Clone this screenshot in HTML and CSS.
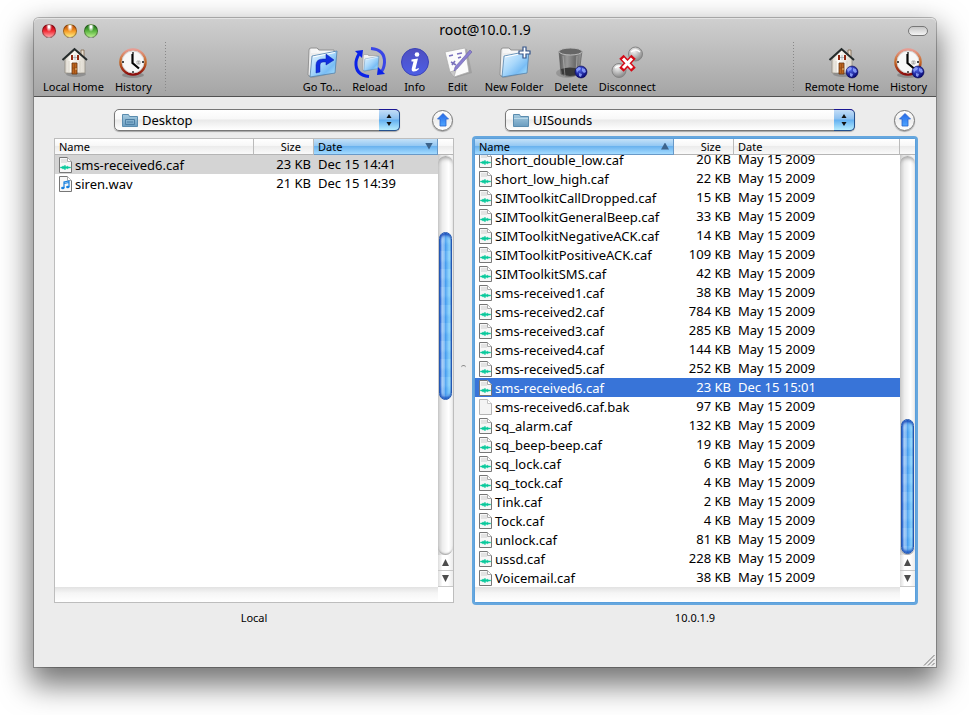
FILE: index.html
```html
<!DOCTYPE html>
<html lang="en">
<head>
  <meta charset="UTF-8">
  <meta name="viewport" content="width=device-width, initial-scale=1.0">
  <title>root@10.0.1.9</title>
  <link rel="stylesheet" href="styles.css">
</head>
<body>
  <svg class="defs" width="0" height="0" aria-hidden="true">
    <defs>
      <linearGradient id="folderBlue" x1="0" y1="0" x2="1" y2="1">
        <stop offset="0" stop-color="#eaf6ff"/>
        <stop offset="0.45" stop-color="#a9d8fb"/>
        <stop offset="0.7" stop-color="#79bdf5"/>
        <stop offset="1" stop-color="#b4ecff"/>
      </linearGradient>
      <linearGradient id="wall" x1="0" y1="0" x2="1" y2="0">
        <stop offset="0" stop-color="#d9d4ca"/>
        <stop offset="0.3" stop-color="#fffdf8"/>
        <stop offset="1" stop-color="#ddd8ce"/>
      </linearGradient>
      <linearGradient id="rim" x1="0" y1="0" x2="0" y2="1">
        <stop offset="0" stop-color="#e89c92"/>
        <stop offset="0.5" stop-color="#c46a28"/>
        <stop offset="1" stop-color="#8c0d0d"/>
      </linearGradient>
      <linearGradient id="infoBlue" x1="0" y1="0" x2="0" y2="1">
        <stop offset="0" stop-color="#4f4fc0"/>
        <stop offset="1" stop-color="#4c5ee6"/>
      </linearGradient>
      <linearGradient id="bin" x1="0" y1="0" x2="1" y2="0">
        <stop offset="0" stop-color="#5a5a5a"/>
        <stop offset="0.35" stop-color="#999"/>
        <stop offset="0.7" stop-color="#6c6c6c"/>
        <stop offset="1" stop-color="#999"/>
      </linearGradient>
      <radialGradient id="glass" cx="0.4" cy="0.3" r="0.7">
        <stop offset="0" stop-color="#f4f4f4"/>
        <stop offset="0.6" stop-color="#b4b4b4"/>
        <stop offset="1" stop-color="#888"/>
      </radialGradient>
      <radialGradient id="globeBlue" cx="0.4" cy="0.3" r="0.7">
        <stop offset="0" stop-color="#4d63e8"/>
        <stop offset="1" stop-color="#070772"/>
      </radialGradient>
      <linearGradient id="upBlue" x1="0" y1="0" x2="0" y2="1">
        <stop offset="0" stop-color="#2468e8"/>
        <stop offset="1" stop-color="#4fa6ff"/>
      </linearGradient>
      <linearGradient id="smallFolder" x1="0" y1="0" x2="0" y2="1">
        <stop offset="0" stop-color="#a6cbe0"/>
        <stop offset="1" stop-color="#6a9cbf"/>
      </linearGradient>
    </defs>

    <symbol id="house" viewBox="0 0 32 32">
      <ellipse cx="19" cy="27" rx="10" ry="3" fill="#000" opacity="0.18"/>
      <path d="M24 3h3v9l-3-3z" fill="#e6ddcf" stroke="#80684d" stroke-width="0.8"/>
      <path d="M8 12L18 3l10 9v14H8z" fill="url(#wall)" stroke="#8e877c" stroke-width="0.7"/>
      <path d="M5.500 13L17.500 2 30 13" fill="none" stroke="#252b2b" stroke-width="2"/>
      <path d="M14 8h8v5h-8z" fill="#922a12"/>
      <path d="M16 8h4v5h-4z" fill="#f2f4f5"/>
      <path d="M18 8v5M16 10.500h4" stroke="#8d9aa0" stroke-width="0.6"/>
      <path d="M15 16h5v11h-5z" fill="#bd651e" stroke="#643310" stroke-width="0.8"/>
      <path d="M17.500 17v9M15 21h5" stroke="#8a4513" stroke-width="0.6"/>
      <circle cx="19" cy="22" r="0.700" fill="#ffe3a0"/>
      <path d="M12 14v12M23 14v12" stroke="#d3cdc2" stroke-width="0.8"/>
    </symbol>

    <symbol id="clock" viewBox="0 0 32 32">
      <ellipse cx="16" cy="28" rx="11" ry="3" fill="#000" opacity="0.2"/>
      <circle cx="16" cy="15" r="12.500" fill="#f8f8f8" stroke="url(#rim)" stroke-width="2.600"/>
      <circle cx="16" cy="15" r="11" fill="none" stroke="#c7c7c7" stroke-width="0.7"/>
      <path d="M16 5v2M16 24v2M5 15h2M25 15h2" stroke="#111" stroke-width="1.300"/>
      <path d="M20 14h3v3h-3zM21.500 14v3" fill="none" stroke="#999" stroke-width="0.7"/>
      <path d="M15.500 7v9l6.500 5.500" fill="none" stroke="#050505" stroke-width="2.200"/>
    </symbol>

    <symbol id="folder" viewBox="0 0 32 32">
      <path d="M2 29L3 4q0-3 3-3h6l2 3 17 1-2 21-22 5z" fill="#777" opacity="0.35"/>
      <path d="M2 28L3 3q0-2 2-2h6l2 2h15v20L5 30z" fill="#ededed" stroke="#858585" stroke-width="0.800"/>
      <path d="M5 3h6l1 2M5 5h22" fill="none" stroke="#fff" stroke-width="1"/>
      <path d="M6 9l25-5-2 22-25 4z" fill="url(#folderBlue)" stroke="#5484af" stroke-width="0.800"/>
      <path d="M7 10l22-4.500" stroke="#fff" stroke-width="1"/>
    </symbol>

    <symbol id="globe" viewBox="0 0 14 14">
      <circle cx="7" cy="7" r="6" fill="url(#globeBlue)" stroke="#050551" stroke-width="0.600"/>
      <path d="M2 4l3-2 2 1-1 2-2 1-1 2zM8 3l3 1 1 3-2 1-2-2zM5 8l3 1-1 3-2-1z" fill="#91a6ff" opacity="0.850"/>
    </symbol>

    <symbol id="caf" viewBox="0 0 13 16">
      <path d="M0.500 0.500h8l4 4v11h-12z" fill="#f7f7f7" stroke="#777"/>
      <path d="M2 2h6v4H2z" fill="#e3e3e3"/>
      <path d="M8.500 0.500v4h4" fill="#fff" stroke="#aaa"/>
      <path d="M1.500 10h1l1.500-1 1 .5L6 8l1 2 1.500-1 1 1h2v1H9.500l-1 1L7 11l-1 2-1-1.500-1 .5-1.500-1h-1z" fill="#09c99c" stroke="#09c99c" stroke-width="0.400"/>
    </symbol>
    <symbol id="wav" viewBox="0 0 13 16">
      <path d="M0.500 0.500h8l4 4v11h-12z" fill="#f7f7f7" stroke="#777"/>
      <path d="M8.500 0.500v4h4" fill="#fff" stroke="#aaa"/>
      <path d="M5 12V6l5-1v6M5 7.500l5-1" fill="none" stroke="#1780e0" stroke-width="1.200"/>
      <ellipse cx="3.800" cy="12" rx="1.700" ry="1.300" fill="#1780e0"/>
      <ellipse cx="8.800" cy="11" rx="1.700" ry="1.300" fill="#1780e0"/>
    </symbol>
    <symbol id="bak" viewBox="0 0 13 16">
      <path d="M0.500 0.500h8l4 4v11h-12z" fill="#f4f4f4" stroke="#b5b5b5"/>
      <path d="M8.500 0.500v4h4" fill="#fff" stroke="#c5c5c5"/>
    </symbol>
    <symbol id="up" viewBox="0 0 12 14">
      <path d="M6 .5L11.500 6H9v7H3V6H.500z" fill="url(#upBlue)" stroke="#2a62cc" stroke-width="0.800"/>
    </symbol>
    <symbol id="updown" viewBox="0 0 6 12">
      <path d="M3 0l2.500 4h-5zM3 12L.500 8h5z" fill="#111"/>
    </symbol>
  </svg>

  <main class="window">
    <header class="chrome">
      <div class="titlebar">
        <div class="lights">
          <button class="light red" aria-label="Close"></button>
          <button class="light orange" aria-label="Minimize"></button>
          <button class="light green" aria-label="Zoom"></button>
        </div>
        <h1>root@10.0.1.9</h1>
        <button class="pill" aria-label="Toggle toolbar"></button>
      </div>

      <nav class="toolbar">
        <div class="group divided-right">
          <button class="tool"><svg><use href="#house"/></svg>Local Home</button>
          <button class="tool"><svg><use href="#clock"/></svg>History</button>
        </div>
        <div class="group">
          <button class="tool">
            <svg viewBox="0 0 32 32">
              <use href="#folder"/>
              <path d="M10 26v-8q0-6 7-6h3V7l8 6-8 5v-3h-3q-3 0-3 3v7z" fill="#1030e0" stroke="#0a1da8" stroke-width="0.500"/>
            </svg>Go To...
          </button>
          <button class="tool">
            <svg viewBox="0 0 32 32">
              <use href="#folder" x="7" y="7" width="19" height="18"/>
              <path d="M15 29.500Q1 28 2 15q1-6 4-9" fill="none" stroke="#0b22e8" stroke-width="3"/>
              <path d="M1 4l8-1-1 8z" fill="#0b22e8"/>
              <path d="M17 1.500q14 1 13.500 14-.5 7-4 10" fill="none" stroke="#3a46e6" stroke-width="3"/>
              <path d="M31 27l-8 1 1-8z" fill="#0b22e8"/>
            </svg>Reload
          </button>
          <button class="tool">
            <svg viewBox="0 0 32 32">
              <circle cx="16" cy="15" r="13.500" fill="url(#infoBlue)" stroke="#3b43b8"/>
              <circle cx="18" cy="7.500" r="2.300" fill="#fff"/>
              <path d="M12.500 12.500l6.500-1-2.500 10q0 1.500 3-.5l.5 1q-3 3-6 2.500-2-.5-1-4l1.500-6h-2z" fill="#fff"/>
            </svg>Info
          </button>
          <button class="tool">
            <svg viewBox="0 0 32 32">
              <path d="M4 6l21-4 5 24-17 5-4-6z" fill="#777" opacity="0.300"/>
              <path d="M3 5l20-4 4 24-15 5-4-5z" fill="#fbfbfb" stroke="#aaa" stroke-width="0.700"/>
              <path d="M8 25l6-2-2 7z" fill="#c9c9c9" stroke="#999" stroke-width="0.500"/>
              <path d="M7 9l4-1M15 7l5-1M9 15l5 3M10 18l3-4M16 11l3-1" stroke="#7a72bd" stroke-width="1.600"/>
              <path d="M28 3l2 2-15 17-3 2 1-4z" fill="#8b80d0" stroke="#5d539f" stroke-width="0.500"/>
            </svg>Edit
          </button>
          <button class="tool">
            <svg viewBox="0 0 32 32">
              <use href="#folder"/>
              <path d="M25 0h3v4h4v3h-4v4h-3V7h-4V4h4z" fill="#fff" stroke="#345489" stroke-width="1.200"/>
            </svg>New Folder
          </button>
          <button class="tool">
            <svg viewBox="0 0 32 32">
              <ellipse cx="12" cy="26" rx="11" ry="5" fill="#000" opacity="0.150"/>
              <path d="M4 4l2 23q8 5 18 0l3-23z" fill="url(#bin)" stroke="#555" stroke-width="0.600"/>
              <path d="M6 22q9-3 18 0l-1 5q-8 4-16 0z" fill="#3a3a3a"/>
              <path d="M8 9l2 20M22 9l-1 19" stroke="#ccc" stroke-width="0.800" opacity="0.600"/>
              <ellipse cx="15.500" cy="4.500" rx="11.500" ry="3.500" fill="#666" stroke="#bbb"/>
              <use href="#globe" x="19" y="18" width="14" height="14"/>
            </svg>Delete
          </button>
          <button class="tool">
            <svg viewBox="0 0 32 32">
              <circle cx="24.500" cy="7" r="7" fill="url(#glass)" stroke="#858585"/>
              <circle cx="8" cy="23.500" r="7" fill="url(#glass)" stroke="#858585"/>
              <path d="M20 5q5-4 9 0M4 21q4-4 8 0" fill="none" stroke="#fff" stroke-width="1.500"/>
              <path d="M12.500 12l8 8.500M20.500 12l-8 8.500" stroke="#d60b17" stroke-width="6" stroke-linecap="square"/>
              <path d="M12 11.500l9 9.500M21 11.500l-9 9.500" stroke="#fff" stroke-width="3"/>
            </svg>Disconnect
          </button>
        </div>
        <div class="group divided-left">
          <button class="tool">
            <svg viewBox="0 0 32 32">
              <use href="#house" x="-2" width="32" height="32"/>
              <use href="#globe" x="19" y="18" width="14" height="14"/>
            </svg>Remote Home
          </button>
          <button class="tool">
            <svg viewBox="0 0 32 32">
              <use href="#clock"/>
              <use href="#globe" x="19" y="18" width="14" height="14"/>
            </svg>History
          </button>
        </div>
      </nav>
    </header>

    <div class="panes">
      <section class="pane local">
        <div class="path">
          <div class="picker">
            <svg class="folder-icon" viewBox="0 0 16 14"><path d="M.5 13.500v-12h6l1 2h8v10z" fill="url(#smallFolder)" stroke="#5b8cae"/><path d="M3.500 6.500h9v5h-9zM5 9h6" fill="none" stroke="#4d7ea3"/></svg>
            <select aria-label="Local folder"><option>Desktop</option></select>
            <span class="cap"><svg><use href="#updown"/></svg></span>
          </div>
          <button class="up" aria-label="Parent folder"><svg><use href="#up"/></svg></button>
        </div>
        <div class="list">
          <table>
            <thead>
              <tr>
                <th><button>Name</button></th>
                <th class="size"><button>Size</button></th>
                <th class="sorted" aria-sort="descending"><button>Date<i class="arrow down"></i></button></th>
              </tr>
            </thead>
            <tbody id="localFiles"></tbody>
          </table>
          <div class="scrollbar">
            <div class="corner"></div>
            <div class="track"><div class="thumb"></div></div>
            <button aria-label="Scroll up"><i class="arrow up-arrow"></i></button>
            <button aria-label="Scroll down"><i class="arrow down"></i></button>
          </div>
          <div class="hscroll"></div>
        </div>
        <p class="caption">Local</p>
      </section>

      <div class="grip"></div>

      <section class="pane remote">
        <div class="path">
          <div class="picker">
            <svg class="folder-icon" viewBox="0 0 16 14"><path d="M.5 13.500v-12h6l1 2h8v10z" fill="url(#smallFolder)" stroke="#5b8cae"/><path d="M1 5.500h14" stroke="#b9d8e8"/></svg>
            <select aria-label="Remote folder"><option>UISounds</option></select>
            <span class="cap"><svg><use href="#updown"/></svg></span>
          </div>
          <button class="up" aria-label="Parent folder"><svg><use href="#up"/></svg></button>
        </div>
        <div class="list focused">
          <table>
            <thead>
              <tr>
                <th class="sorted" aria-sort="ascending"><button>Name<i class="arrow up-arrow"></i></button></th>
                <th class="size"><button>Size</button></th>
                <th><button>Date</button></th>
              </tr>
            </thead>
            <tbody id="remoteFiles"></tbody>
          </table>
          <div class="scrollbar">
            <div class="corner"></div>
            <div class="track"><div class="thumb"></div></div>
            <button aria-label="Scroll up"><i class="arrow up-arrow"></i></button>
            <button aria-label="Scroll down"><i class="arrow down"></i></button>
          </div>
          <div class="hscroll"></div>
        </div>
        <p class="caption">10.0.1.9</p>
      </section>
    </div>
    <svg class="resize" viewBox="0 0 12 12"><path d="M1 11.500L11.500 1M5 11.500L11.500 5M9 11.500L11.500 9" stroke="#777" fill="none"/></svg>
  </main>

  <script>
    const localFiles = [
      ['sms-received6.caf', '23 KB', 'Dec 15 14:41'],
      ['siren.wav', '21 KB', 'Dec 15 14:39']
    ];
    const remoteFiles = [
      ['short_double_low.caf', '20 KB', 'May 15 2009'],
      ['short_low_high.caf', '22 KB', 'May 15 2009'],
      ['SIMToolkitCallDropped.caf', '15 KB', 'May 15 2009'],
      ['SIMToolkitGeneralBeep.caf', '33 KB', 'May 15 2009'],
      ['SIMToolkitNegativeACK.caf', '14 KB', 'May 15 2009'],
      ['SIMToolkitPositiveACK.caf', '109 KB', 'May 15 2009'],
      ['SIMToolkitSMS.caf', '42 KB', 'May 15 2009'],
      ['sms-received1.caf', '38 KB', 'May 15 2009'],
      ['sms-received2.caf', '784 KB', 'May 15 2009'],
      ['sms-received3.caf', '285 KB', 'May 15 2009'],
      ['sms-received4.caf', '144 KB', 'May 15 2009'],
      ['sms-received5.caf', '252 KB', 'May 15 2009'],
      ['sms-received6.caf', '23 KB', 'Dec 15 15:01'],
      ['sms-received6.caf.bak', '97 KB', 'May 15 2009'],
      ['sq_alarm.caf', '132 KB', 'May 15 2009'],
      ['sq_beep-beep.caf', '19 KB', 'May 15 2009'],
      ['sq_lock.caf', '6 KB', 'May 15 2009'],
      ['sq_tock.caf', '4 KB', 'May 15 2009'],
      ['Tink.caf', '2 KB', 'May 15 2009'],
      ['Tock.caf', '4 KB', 'May 15 2009'],
      ['unlock.caf', '81 KB', 'May 15 2009'],
      ['ussd.caf', '228 KB', 'May 15 2009'],
      ['Voicemail.caf', '38 KB', 'May 15 2009']
    ];

    function fillTable(id, files, selected) {
      document.getElementById(id).innerHTML = files.map(([name, size, date], i) => {
        const type = name.split('.').pop();
        return `<tr${i === selected ? ' class="selected"' : ''}>
          <td class="name"><svg class="file"><use href="#${type}"/></svg>${name}</td>
          <td class="size">${size}</td>
          <td>${date}</td>
        </tr>`;
      }).join('');
    }

    fillTable('localFiles', localFiles, 0);
    fillTable('remoteFiles', remoteFiles, 12);
  </script>
</body>
</html>
```
FILE: styles.css
```css
* {
  box-sizing: border-box;
}
body {
  display: flex;
  height: 100vh;
  margin: 0;
  padding: 18px 33px 48px 34px;
  background: #fff;
  color: #000;
  font-family: "Lucida Grande", "Noto Sans", sans-serif;
  font-size: 13px;
}
button {
  margin: 0;
  padding: 0;
  border: 0;
  background: none;
  color: inherit;
  font: inherit;
}
.defs {
  position: absolute;
}
.window {
  position: relative;
  display: flex;
  flex: 1;
  flex-direction: column;
  min-width: 0;
  border-radius: 5px 5px 0 0;
  background: #ececec;
  box-shadow: 0 0 0 1px rgba(0, 0, 0, 0.25), 0 14px 30px 4px rgba(0, 0, 0, 0.55);
}
.chrome {
  height: 79px;
  border-top: 1px solid #e4e4e4;
  border-bottom: 1px solid #515151;
  border-radius: 5px 5px 0 0;
  background: linear-gradient(#cfcfcf, #a5a5a5);
}

/* title bar */
.titlebar {
  display: grid;
  grid-template-columns: 1fr auto 1fr;
  align-items: center;
  height: 23px;
  padding: 0 8px;
}
.titlebar h1 {
  margin: 0;
  padding-bottom: 1px;
  font-size: 14px;
  font-weight: normal;
  line-height: 20px;
}
.lights {
  display: flex;
  gap: 7px;
}
.light {
  width: 14px;
  height: 14px;
  border: 1px solid rgba(0, 0, 0, 0.35);
  border-radius: 50%;
}
.red {
  background: radial-gradient(ellipse at 50% 15%, #fff 0 8%, transparent 35%), linear-gradient(#c8101c 20%, #f22b35 50%, #ffa6aa);
}
.orange {
  background: radial-gradient(ellipse at 50% 15%, #fff 0 8%, transparent 35%), linear-gradient(#d06410 20%, #f59a25 50%, #ffee85);
}
.green {
  background: radial-gradient(ellipse at 50% 15%, #fff 0 8%, transparent 35%), linear-gradient(#348a28 20%, #5ab53f 50%, #baf090);
}
.pill {
  justify-self: end;
  width: 20px;
  height: 10px;
  border: 1px solid #777;
  border-radius: 5px;
  background: linear-gradient(#c6c6c6, #f4f4f4);
}

/* toolbar */
.toolbar {
  display: flex;
  justify-content: space-between;
  height: 51px;
  padding: 0 9px;
}
.group {
  display: flex;
  gap: 11px;
  padding-top: 5px;
}
.tool {
  display: flex;
  flex-direction: column;
  align-items: center;
  min-width: 32px;
  font-size: 11px;
  line-height: 16px;
  white-space: nowrap;
}
.tool svg {
  width: 32px;
  height: 32px;
  overflow: visible;
}
.divided-right {
  padding-right: 14px;
  background: linear-gradient(#888 1px, transparent 1px) right top / 1px 3px repeat-y;
}
.divided-left {
  padding-left: 12px;
  background: linear-gradient(#888 1px, transparent 1px) left top / 1px 3px repeat-y;
}

/* file panes */
.panes {
  display: grid;
  flex: 1;
  grid-template-columns: 400fr 20px 442fr;
  min-height: 0;
  padding: 12px 20px 41px;
}
.pane {
  display: flex;
  flex-direction: column;
  min-width: 0;
  min-height: 0;
}
.path {
  display: flex;
  align-items: center;
  gap: 32px;
  margin-bottom: 7px;
  padding: 0 1px 0 60px;
}
.remote .path {
  gap: 39px;
  padding-left: 31px;
}
.picker {
  position: relative;
  flex: 1;
  height: 22px;
}
.picker select {
  width: 100%;
  height: 22px;
  padding: 0 30px 0 27px;
  border: 1px solid #777;
  border-radius: 5px;
  outline: 0;
  background: linear-gradient(#fff, #f8f8f8 45%, #e9e9e9 50%, #fff);
  box-shadow: 0 1px 1px rgba(0, 0, 0, 0.3);
  color: #000;
  font: 13px "Lucida Grande", "Noto Sans", sans-serif;
  appearance: none;
}
.folder-icon {
  position: absolute;
  top: 4px;
  left: 8px;
  width: 16px;
  height: 14px;
}
.cap {
  position: absolute;
  top: 0;
  right: 0;
  display: grid;
  place-items: center;
  width: 21px;
  height: 22px;
  border: 1px solid #24508c;
  border-top-color: #1b1794;
  border-left: 0;
  border-radius: 0 5px 5px 0;
  background: linear-gradient(#c3ddf7, #8cc0f0 45%, #63b0f0 50%, #b5ecff);
  pointer-events: none;
}
.cap svg {
  width: 6px;
  height: 12px;
}
.up {
  display: grid;
  place-items: center;
  width: 21px;
  height: 21px;
  border: 1px solid #777;
  border-radius: 50%;
  background: linear-gradient(#fff, #eee 50%, #fff);
  box-shadow: 0 1px 1px rgba(0, 0, 0, 0.3);
}
.up svg {
  width: 12px;
  height: 14px;
}
.list {
  display: grid;
  flex: 1;
  grid-template-rows: 1fr 15px;
  grid-template-columns: 1fr 15px;
  min-height: 0;
  border: 1px solid #bdbdbd;
  background: #fff;
}
.focused {
  border-color: #5a9fdc;
  border-radius: 2px;
  box-shadow: 0 0 0 2px #66a7de;
}
.caption {
  margin: 0;
  padding-top: 7px;
  font-size: 11px;
  line-height: 16px;
  text-align: center;
}
.grip {
  align-self: center;
  width: 5px;
  height: 5px;
  margin-left: 7px;
  border-top: 1px solid #888;
  border-radius: 50%;
}

/* tables */
table {
  display: flex;
  flex-direction: column;
  min-height: 0;
}
thead {
  display: block;
}
tbody {
  display: flex;
  flex: 1;
  flex-direction: column;
  min-height: 0;
  overflow: hidden;
}
.remote tbody {
  justify-content: flex-end;
}
tr {
  display: grid;
  flex: none;
  grid-template-columns: 199px 60px 1fr;
}
th {
  height: 16px;
  padding: 0;
  border-right: 1px solid #bbb;
  border-bottom: 1px solid #b5b5b5;
  background: linear-gradient(#fff, #f7f7f7 45%, #ececec 50%, #fafafa);
  font-size: 11px;
  font-weight: normal;
  line-height: 13px;
}
th button {
  display: flex;
  align-items: center;
  justify-content: space-between;
  width: 100%;
  height: 14px;
  padding: 0 4px;
}
th.size button {
  justify-content: flex-end;
  padding-right: 12px;
}
th.sorted {
  border-color: #6899c8;
  background: linear-gradient(#c4e1f8, #94c8f3 45%, #6bb3ef 50%, #a4dbff);
}
td {
  height: 19px;
  padding: 0 4px;
  line-height: 18px;
  white-space: nowrap;
}
td.name {
  display: flex;
  align-items: center;
  gap: 3px;
}
td.size {
  padding: 0 3px 0 0;
  text-align: right;
}
.file {
  flex: none;
  width: 13px;
  height: 16px;
}
.selected {
  background: #d4d4d4;
}
.focused .selected {
  background: #3874d8;
  color: #fff;
}

/* scroll bars */
.arrow {
  width: 7px;
  height: 7px;
  background: #4c4c4c;
}
.arrow.down {
  clip-path: polygon(0 0, 100% 0, 50% 100%);
}
.arrow.up-arrow {
  clip-path: polygon(0 100%, 100% 100%, 50% 0);
}
th .arrow {
  width: 8px;
  background: #3c648c;
}
.scrollbar {
  display: flex;
  flex-direction: column;
  min-height: 0;
  background: linear-gradient(90deg, #c9c9c9, #ededed 30%, #fff 70%, #ececec);
}
.corner {
  height: 16px;
  border-bottom: 1px solid #b5b5b5;
  background: linear-gradient(#fff, #f7f7f7 45%, #ececec 50%, #fafafa);
}
.track {
  display: grid;
  flex: 1;
  grid-template-rows: 76fr 169fr 155fr;
  border-top: 1px solid #ddd;
  border-radius: 8px;
  box-shadow: inset 0 6px 4px -4px #999, inset 0 -2px 2px -1px #999;
}
.remote .track {
  grid-template-rows: 264fr 135fr 1fr;
}
.thumb {
  grid-row: 2;
  margin: 0 1px;
  border: 1px solid #2457b0;
  border-radius: 7px;
  background:
    repeating-linear-gradient(rgba(255, 255, 255, 0.08) 0 8px, rgba(20, 100, 220, 0.06) 12px 18px),
    linear-gradient(90deg, #2567d5, #a7cdf6 18%, #83bdf5 40%, #4ba2f0 50%, #7cc7fb 75%, #a0e9ff 92%, #5a9bd0);
  box-shadow: inset 0 3px 3px -1px #1543b5, inset 0 -3px 3px -1px #1c55c0;
}
.scrollbar button {
  display: grid;
  flex: none;
  place-items: center;
  height: 16px;
  border-bottom: 1px solid #c8c8c8;
  background: linear-gradient(90deg, #ddd, #fff 30%, #fff 65%, #ececec);
}
.hscroll {
  background: linear-gradient(#e2e2e2, #f5f5f5 40%, #fff);
}
.resize {
  position: absolute;
  right: 1px;
  bottom: 1px;
  width: 12px;
  height: 12px;
}
```
